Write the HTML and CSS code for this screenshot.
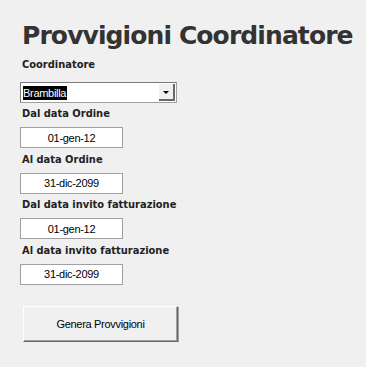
FILE: index.html
```html
<!DOCTYPE html>
<html lang="it">
<head>
  <meta charset="UTF-8" />
  <title>Provvigioni Coordinatore</title>
  <link rel="stylesheet" href="styles.css">
</head>
<body>
  <div class="form">
    <h1 class="title">Provvigioni Coordinatore</h1>

    <div class="field first">
      <label class="lbl">Coordinatore</label>
      <div class="combo">
        <span class="combo-text"><span class="sel">Brambilla</span></span>
        <span class="combo-btn"><span class="arrow"></span></span>
      </div>
    </div>

    <div class="field">
      <label class="lbl">Dal data Ordine</label>
      <input class="box" type="text" value="01-gen-12" readonly>
    </div>
    <div class="field">
      <label class="lbl">Al data Ordine</label>
      <input class="box" type="text" value="31-dic-2099" readonly>
    </div>
    <div class="field">
      <label class="lbl">Dal data invito fatturazione</label>
      <input class="box" type="text" value="01-gen-12" readonly>
    </div>
    <div class="field">
      <label class="lbl">Al data invito fatturazione</label>
      <input class="box" type="text" value="31-dic-2099" readonly>
    </div>

    <button class="btn" type="button">Genera Provvigioni</button>
  </div>
</body>
</html>
```

FILE: styles.css
```css
* {
  margin: 0;
  padding: 0;
  box-sizing: border-box;
}
body {
  background-color: #f0f0f0;
  font-family: "Liberation Sans", Arial, sans-serif;
  color: #000;
}
.form {
  display: flex;
  flex-direction: column;
  align-items: flex-start;
  padding: 19px 0 0 20px;
}
.title {
  font-family: "DejaVu Sans", Verdana, sans-serif;
  font-size: 25px;
  font-weight: bold;
  letter-spacing: -0.9px;
  color: #333333;
  line-height: 34px;
  white-space: nowrap;
  margin-left: 2px;
}
.field {
  display: flex;
  flex-direction: column;
  align-items: flex-start;
  margin-top: 3.4px;
}
.field.first {
  margin-top: 4px;
}
.lbl {
  font-family: "DejaVu Sans Condensed", "DejaVu Sans", sans-serif;
  font-weight: bold;
  font-size: 11px;
  line-height: 16px;
  color: #222;
  margin: 0 0 5px 2px;
}
.field.first .lbl {
  margin-bottom: 9px;
}
.combo {
  width: 157px;
  height: 21px;
  background: #fff;
  border: 1px solid #7a7a7a;
  border-right-color: #a0a0a0;
  border-bottom-color: #a0a0a0;
  display: flex;
  align-items: center;
  padding: 1px;
}
.combo-text {
  flex: 1;
  padding-left: 1px;
  font-size: 11px;
}
.sel {
  background: #000;
  color: #fff;
  padding: 1px 1px 1px 0;
  letter-spacing: -0.3px;
}
.combo-btn {
  width: 16px;
  height: 17px;
  background: #f0f0f0;
  border-right: 2px solid #696969;
  border-bottom: 2px solid #696969;
  display: flex;
  align-items: center;
  justify-content: center;
}
.arrow {
  width: 0;
  height: 0;
  border-left: 3px solid transparent;
  border-right: 3px solid transparent;
  border-top: 3px solid #000;
  margin-top: 2px;
}
.box {
  width: 103px;
  height: 21px;
  border: 1px solid #a0a0a0;
  background: #fff;
  font-family: "Liberation Sans", Arial, sans-serif;
  font-size: 11px;
  text-align: center;
  letter-spacing: -0.3px;
  color: #000;
  outline: none;
}
.btn {
  margin: 21px 0 0 3px;
  width: 155px;
  height: 36px;
  background: #f0f0f0;
  border: 1px solid;
  border-color: #fff #696969 #696969 #fff;
  box-shadow: inset -1px -1px 0 #a0a0a0, 1px 1px 0 #a0a0a0;
  font-family: "Liberation Sans", Arial, sans-serif;
  font-size: 11px;
  letter-spacing: -0.3px;
  color: #000;
}
```
